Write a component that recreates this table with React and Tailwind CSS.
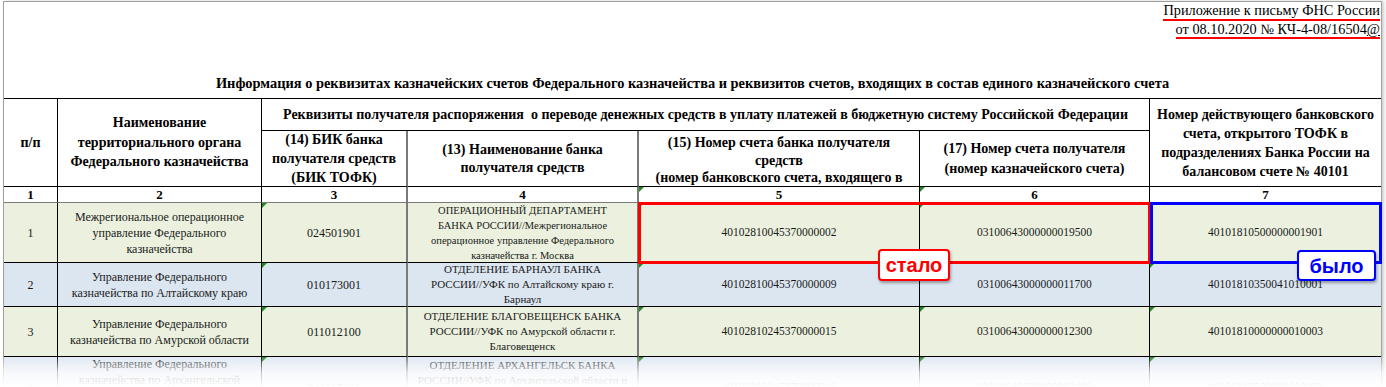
import React from 'react';

const rows = [
    {
        n: '1',
        bg: 'bg-[#ebf1de]',
        org: ['Межрегиональное операционное', 'управление Федерального', 'казначейства'],
        bik: '024501901',
        bank: ['ОПЕРАЦИОННЫЙ ДЕПАРТАМЕНТ', 'БАНКА РОССИИ//Межрегиональное', 'операционное управление Федерального', 'казначейства г. Москва'],
        small: true,
        eks: '40102810045370000002',
        ks: '03100643000000019500',
        old: '40101810500000001901',
    },
    {
        n: '2',
        bg: 'bg-[#dce6f1]',
        org: ['Управление Федерального', 'казначейства по Алтайскому краю'],
        bik: '010173001',
        bank: ['ОТДЕЛЕНИЕ БАРНАУЛ БАНКА', 'РОССИИ//УФК по Алтайскому краю г.', 'Барнаул'],
        eks: '40102810045370000009',
        ks: '03100643000000011700',
        old: '40101810350041010001',
    },
    {
        n: '3',
        bg: 'bg-[#ebf1de]',
        org: ['Управление Федерального', 'казначейства по Амурской области'],
        bik: '011012100',
        bank: ['ОТДЕЛЕНИЕ БЛАГОВЕЩЕНСК БАНКА', 'РОССИИ//УФК по Амурской области г.', 'Благовещенск'],
        eks: '40102810245370000015',
        ks: '03100643000000012300',
        old: '40101810000000010003',
    },
    {
        n: '4',
        bg: 'bg-[#dce6f1]',
        org: ['Управление Федерального', 'казначейства по Архангельской', 'области и Ненецкому автономному', 'округу'],
        bik: '011117401',
        bank: ['ОТДЕЛЕНИЕ АРХАНГЕЛЬСК БАНКА', 'РОССИИ//УФК по Архангельской области и', 'Ненецкому автономному округу г.', 'Архангельск'],
        eks: '40102810045370000016',
        ks: '03100643000000012400',
        old: '40101810500000010003',
    },
];

// little green "number stored as text" marker
function Flag() {
    return <span className="absolute top-0 left-0 w-0 h-0 border-t-[5px] border-t-[#1f8a1f] border-r-[5px] border-r-transparent" />;
}

function Lines({ items }) {
    return items.map((t, i) => (
        <span key={i} className="block whitespace-nowrap">{t}</span>
    ));
}

export default function App() {
    const cell = 'relative flex items-center justify-center text-center border-r border-b border-black overflow-hidden';
    const head = cell + ' font-bold text-[14px]';

    return (
        <div className="relative w-[1386px] h-[387px] overflow-hidden bg-white text-black font-['Liberation_Serif','Times_New_Roman',serif]">
            <div className="ml-[3px] mt-[1px] w-[1379px] border-l border-t border-r border-[#a0a0a0] shadow-[2px_0_3px_rgba(0,0,0,0.2)]">
                {/* Title area */}
                <div className="h-[96px] flex flex-col">
                    <div className="flex flex-col items-end pr-[1px] text-[14.3px]">
                        <span className="leading-[17px] border-b-2 border-[#ff0000]">Приложение к письму ФНС России</span>
                        <span className="leading-[16px] border-b-2 border-[#ff0000]">от 08.10.2020 № КЧ-4-08/16504<span className="underline">@</span></span>
                    </div>
                    <div className="flex-1" />
                    <div className="text-center font-bold text-[14.4px] leading-[18px] pb-[6px]">
                        Информация о реквизитах казначейских счетов Федерального казначейства и реквизитов счетов, входящих в состав единого казначейского счета
                    </div>
                </div>

                {/* Table */}
                <div className="grid grid-cols-[54px_204px_146px_231px_281px_230px_231px] grid-rows-[32px_56px_16px_60px_44px_50px_62px] border-t border-black">
                    <div className={head + ' row-span-2 leading-[19px]'}>п/п</div>
                    <div className={head + ' row-span-2 leading-[19.5px]'}>
                        <div><Lines items={['Наименование', 'территориального органа', 'Федерального казначейства']} /></div>
                    </div>
                    <div className={head + ' col-span-4 leading-[19px]'}>
                        <span className="whitespace-pre">Реквизиты получателя распоряжения  о переводе денежных средств в уплату платежей в бюджетную систему Российской Федерации</span>
                    </div>
                    <div className={head + ' row-span-2 border-r-0 leading-[19px]'}>
                        <div><Lines items={['Номер действующего банковского', 'счета, открытого ТОФК в', 'подразделениях Банка России на', 'балансовом счете № 40101']} /></div>
                    </div>

                    <div className={head + ' leading-[19px] border-r-2 border-r-[#7a7a7a]'}>
                        <div><Lines items={['(14) БИК банка', 'получателя средств', '(БИК ТОФК)']} /></div>
                    </div>
                    <div className={head + ' leading-[18px] border-r-2 border-r-[#7a7a7a]'}>
                        <div><Lines items={['(13) Наименование банка', 'получателя средств']} /></div>
                    </div>
                    <div className={head + ' items-start pt-[3px] leading-[17.5px]'}>
                        <div><Lines items={['(15) Номер счета банка получателя', 'средств', '(номер банковского счета, входящего в']} /></div>
                    </div>
                    <div className={head + ' leading-[20px]'}>
                        <div><Lines items={['(17) Номер счета получателя', '(номер казначейского счета)']} /></div>
                    </div>

                    {['1', '2', '3', '4', '5', '6', '7'].map((n, i) => (
                        <div
                            key={n}
                            className={
                                cell +
                                ' font-bold text-[13px] leading-[16px] border-b-[#7a7a7a]' +
                                (i === 2 || i === 3 ? ' border-r-2 border-r-[#7a7a7a]' : '') +
                                (i === 6 ? ' border-r-0' : '')
                            }
                        >
                            {(i === 4 || i === 5) && <Flag />}
                            {n}
                        </div>
                    ))}

                    {rows.map((r) => (
                        <React.Fragment key={r.n}>
                            <div className={cell + ' ' + r.bg + ' text-[12px] text-[#1a1a1a]'}>{r.n}</div>
                            <div className={cell + ' ' + r.bg + ' text-[12px] leading-[16px] text-[#1a1a1a]'}>
                                <div><Lines items={r.org} /></div>
                            </div>
                            <div className={cell + ' ' + r.bg + ' text-[12px] text-[#1a1a1a] border-r-2 border-r-[#7a7a7a]'}>
                                <Flag />
                                {r.bik}
                            </div>
                            <div className={cell + ' ' + r.bg + ' leading-[15px] text-[#1a1a1a] border-r-2 border-r-[#7a7a7a] ' + (r.small ? 'text-[10.5px]' : 'text-[11px]')}>
                                <div><Lines items={r.bank} /></div>
                            </div>
                            <div className={cell + ' ' + r.bg + ' text-[11.5px] text-[#1a1a1a]'}>
                                <Flag />
                                {r.eks}
                            </div>
                            <div className={cell + ' ' + r.bg + ' text-[11.5px] text-[#1a1a1a]'}>
                                <Flag />
                                {r.ks}
                            </div>
                            <div className={cell + ' ' + r.bg + ' text-[11.5px] text-[#1a1a1a] border-r-0'}>
                                <Flag />
                                {r.old}
                            </div>
                        </React.Fragment>
                    ))}
                </div>
            </div>

            {/* Annotations */}
            <div className="absolute left-[638px] top-[202px] w-[513px] h-[62px] border-[3px] border-[#ff0000]" />
            <div className="absolute left-[1150px] top-[202px] w-[232px] h-[62px] border-[3px] border-[#0000ff]" />
            <div className="absolute left-[878px] top-[249px] w-[72px] h-[32px] flex items-center justify-center bg-white border-2 border-[#ff0000] rounded-[4px] shadow-[1px_2px_3px_rgba(0,0,0,0.35)] text-[#ff0000] font-bold text-[20px] font-['Liberation_Sans_Narrow','Liberation_Sans',sans-serif]">
                стало
            </div>
            <div className="absolute left-[1297px] top-[250px] w-[79px] h-[31px] flex items-center justify-center bg-white border-2 border-[#0000ff] rounded-[4px] shadow-[1px_2px_3px_rgba(0,0,0,0.35)] text-[#0000ff] font-bold text-[20px] font-['Liberation_Sans_Narrow','Liberation_Sans',sans-serif]">
                было
            </div>

            {/* bottom fade */}
            <div className="absolute left-0 right-0 bottom-0 h-[30px] bg-linear-to-b from-white/10 via-white/75 to-white" />
        </div>
    );
}
